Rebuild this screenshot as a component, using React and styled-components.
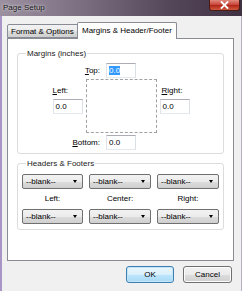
import React from 'react';
import styled, { createGlobalStyle } from 'styled-components';

const GlobalStyle = createGlobalStyle`
  html, body {
    margin: 0;
    padding: 0;
    background: #f0f0f0;
  }
  body {
    font-family: "Liberation Sans", Arial, sans-serif;
    font-size: 8px;
    color: #000;
  }
`;

const Window = styled.div`
  width: 242px;
  height: 291px;
  display: flex;
  flex-direction: column;
  overflow: hidden;
  background: #f0f0f0;
`;

const TitleBar = styled.div`
  height: 16px;
  flex: none;
  display: flex;
  align-items: flex-start;
  justify-content: space-between;
  padding-left: 3px;
  padding-right: 2px;
  background: linear-gradient(90deg, #9b90a0 0%, #7b6d80 35%, #55475a 70%, #3f3243 100%);
`;

const Title = styled.span`
  margin-top: 3px;
  font-size: 8px;
  color: #111;
  text-shadow: 0 0 4px rgba(255, 255, 255, 0.7), 0 0 2px rgba(255, 255, 255, 0.6);
`;

const CloseButton = styled.div`
  width: 31px;
  height: 11px;
  display: flex;
  align-items: center;
  justify-content: center;
  border: 1px solid #4a1a16;
  border-top: none;
  border-radius: 0 0 3px 3px;
  background: linear-gradient(180deg, #e08a7e 0%, #c9473b 45%, #b3281c 55%, #cf5a3c 100%);
  box-sizing: border-box;
`;

const Frame = styled.div`
  flex: 1;
  display: flex;
  border-left: 2px solid #a994c8;
  border-right: 2px solid #b9aec4;
`;

const Client = styled.div`
  flex: 1;
  display: flex;
  flex-direction: column;
  padding: 6px 7px 0 5px;
  background: #f0f0f0;
`;

const TabStrip = styled.div`
  display: flex;
  align-items: flex-end;
  height: 16px;
  position: relative;
  z-index: 1;
`;

const Tab = styled.div`
  box-sizing: border-box;
  height: ${p => (p.$active ? '17px' : '14px')};
  padding: ${p => (p.$active ? '3px 4px 0' : '2px 3px 0')};
  margin-left: ${p => (p.$active ? '-2px' : '0')};
  margin-bottom: ${p => (p.$active ? '-1px' : '0')};
  border: 1px solid #898c95;
  border-bottom: ${p => (p.$active ? 'none' : '1px solid #898c95')};
  border-radius: 2px 2px 0 0;
  background: ${p => (p.$active ? '#fff' : 'linear-gradient(180deg, #f2f2f2 0%, #ebebeb 50%, #dddddd 51%, #cfcfcf 100%)')};
  white-space: nowrap;
  width: ${p => p.$w}px;
`;

const Panel = styled.div`
  box-sizing: border-box;
  height: 223px;
  border: 1px solid #898c95;
  background: #fff;
  padding: 10px 9px 0 9px;
  display: flex;
  flex-direction: column;
  gap: 5px;
`;

const Group = styled.fieldset`
  margin: 0;
  padding: ${p => p.$pad};
  border: 1px solid #dcdcdc;
  border-radius: 3px;
  min-width: 0;
  height: ${p => p.$h}px;
  box-sizing: border-box;
`;

const Legend = styled.legend`
  padding: 0 1px;
  margin-left: 4px;
  color: #1a1a1a;
  line-height: 9px;
`;

const MarginGrid = styled.div`
  display: grid;
  grid-template-columns: 30px 71px 30px;
  column-gap: 3px;
  justify-content: center;
  margin-left: 1px;
`;

const LabelRow = styled.div`
  grid-column: 1 / 4;
  display: grid;
  grid-template-columns: 1fr 30px 1fr;
  column-gap: 6px;
  align-items: center;
  margin: ${p => p.$m};
`;

const RowLabel = styled.span`
  justify-self: end;
  line-height: 10px;
`;

const Field = styled.div`
  box-sizing: border-box;
  width: 30px;
  height: 15px;
  border: 1px solid #abadb3;
  border-left-color: #e2e3ea;
  border-right-color: #dbdfe6;
  border-bottom-color: #e3e9ef;
  background: #fff;
  padding: 2px 0 0 2px;
  line-height: 10px;
`;

const Selected = styled.span`
  background: #3399ff;
  color: #fff;
`;

const Side = styled.div`
  display: flex;
  flex-direction: column;
  align-items: flex-start;
  gap: 3px;
  padding-top: 7px;
`;

const SideLabel = styled.span`
  line-height: 10px;
  padding-left: ${p => p.$pl || 0}px;
`;

const PagePreview = styled.div`
  box-sizing: border-box;
  height: 54px;
  border: 1px dashed #a0a0a0;
`;

const DropGrid = styled.div`
  display: grid;
  grid-template-columns: 61px 62px 62px;
  column-gap: 6px;
  margin-top: 6px;
`;

const Select = styled.div`
  box-sizing: border-box;
  height: 15px;
  display: flex;
  align-items: center;
  justify-content: space-between;
  padding: 0 5px 0 3px;
  border: 1px solid #707070;
  border-radius: 2px;
  background: linear-gradient(180deg, #f2f2f2 0%, #ebebeb 50%, #dddddd 51%, #cfcfcf 100%);
`;

const Arrow = styled.span`
  width: 0;
  height: 0;
  border-left: 2.5px solid transparent;
  border-right: 2.5px solid transparent;
  border-top: 3px solid #000;
`;

const ColLabel = styled.div`
  text-align: center;
  line-height: 10px;
  padding: 5px 0 5px;
`;

const ButtonRow = styled.div`
  display: flex;
  justify-content: flex-end;
  gap: 9px;
  padding: 5px 2px 0 0;
`;

const Button = styled.div`
  box-sizing: border-box;
  width: ${p => p.$w}px;
  height: 17px;
  display: flex;
  align-items: center;
  justify-content: center;
  border: 1px solid ${p => (p.$default ? '#3c7fb1' : '#707070')};
  border-radius: 3px;
  background: ${p => (p.$default
    ? 'linear-gradient(180deg, #eaf6fd 0%, #d9f0fc 50%, #bee6fd 51%, #a7d9f5 100%)'
    : 'linear-gradient(180deg, #f2f2f2 0%, #ebebeb 50%, #dddddd 51%, #cfcfcf 100%)')};
  box-shadow: ${p => (p.$default ? 'inset 0 0 0 1px #c4e5f6' : 'inset 0 0 0 1px #fcfcfc')};
`;

const CloseX = () => (
  <svg width="9" height="8" viewBox="0 0 9 8">
    <path d="M1.5 1 L7.5 7 M7.5 1 L1.5 7" stroke="#fff" strokeWidth="1.8" strokeLinecap="square" />
  </svg>
);

const Dropdown = () => (
  <Select>
    <span>--blank--</span>
    <Arrow />
  </Select>
);

const App = () => (
  <>
    <GlobalStyle />
    <Window>
      <TitleBar>
        <Title>Page Setup</Title>
        <CloseButton><CloseX /></CloseButton>
      </TitleBar>
      <Frame>
        <Client>
          <TabStrip>
            <Tab $w={72}>Format &amp; Options</Tab>
            <Tab $active $w={100}>Margins &amp; Header/Footer</Tab>
          </TabStrip>
          <Panel>
            <Group $h={105} $pad="0 4px">
              <Legend>Margins (inches)</Legend>
              <MarginGrid>
                <LabelRow $m="5px 0 1px">
                  <RowLabel><u>T</u>op:</RowLabel>
                  <Field><Selected>0.0</Selected></Field>
                </LabelRow>
                <Side>
                  <SideLabel><u>L</u>eft:</SideLabel>
                  <Field>0.0</Field>
                </Side>
                <PagePreview />
                <Side>
                  <SideLabel $pl={2}><u>R</u>ight:</SideLabel>
                  <Field>0.0</Field>
                </Side>
                <LabelRow $m="2px 0 0">
                  <RowLabel><u>B</u>ottom:</RowLabel>
                  <Field>0.0</Field>
                </LabelRow>
              </MarginGrid>
            </Group>
            <Group $h={71} $pad="0 4px">
              <Legend>Headers &amp; Footers</Legend>
              <DropGrid>
                <Dropdown />
                <Dropdown />
                <Dropdown />
                <ColLabel>Left:</ColLabel>
                <ColLabel>Center:</ColLabel>
                <ColLabel>Right:</ColLabel>
                <Dropdown />
                <Dropdown />
                <Dropdown />
              </DropGrid>
            </Group>
          </Panel>
          <ButtonRow>
            <Button $default $w={48}>OK</Button>
            <Button $w={49}>Cancel</Button>
          </ButtonRow>
        </Client>
      </Frame>
    </Window>
  </>
);

export default App;
